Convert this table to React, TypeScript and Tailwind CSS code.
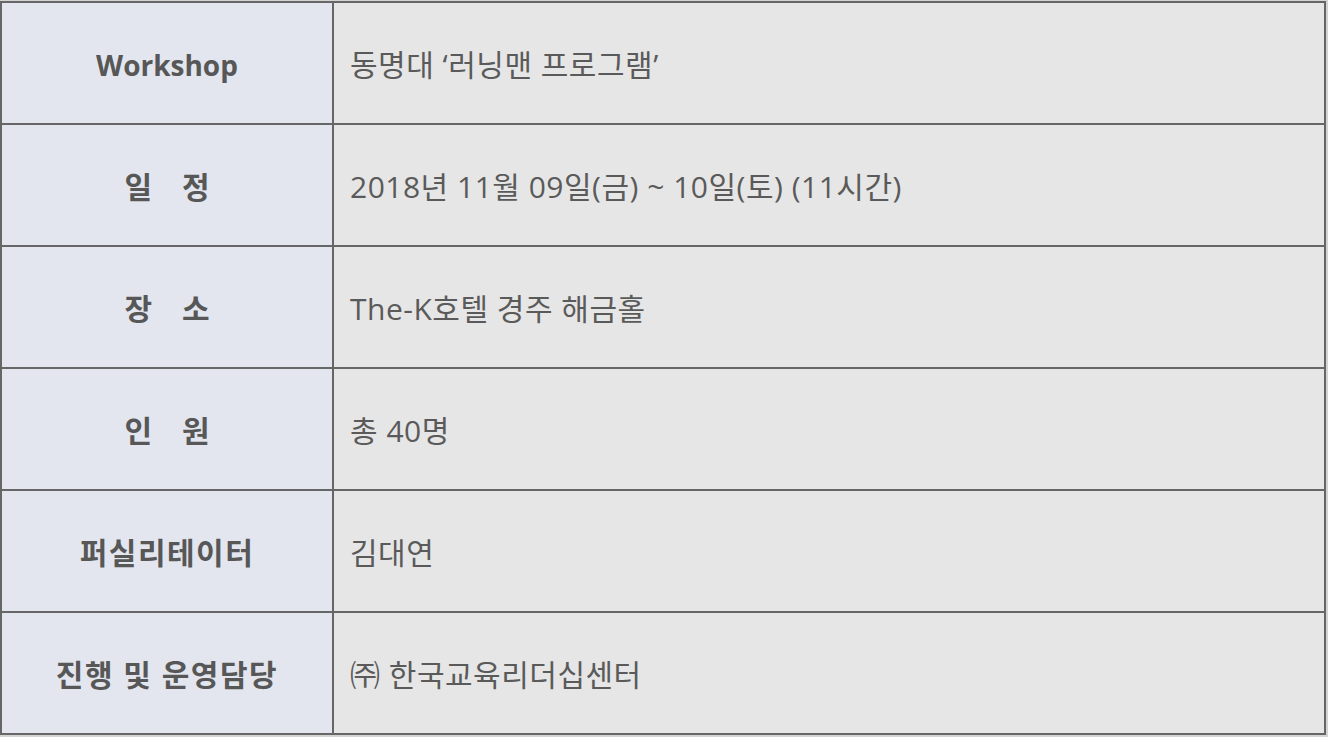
import React from "react";

const rows: { label: React.ReactNode; value: string }[] = [
  { label: "Workshop", value: "동명대 ‘러닝맨 프로그램’" },
  { label: ["일", "정"], value: "2018년 11월 09일(금) ~ 10일(토) (11시간)" },
  { label: ["장", "소"], value: "The-K호텔 경주 해금홀" },
  { label: ["인", "원"], value: "총 40명" },
  { label: "퍼실리테이터", value: "김대연" },
  { label: "진행 및 운영담당", value: "㈜ 한국교육리더십센터" },
];

export default function App() {
  return (
    <div
      className="w-[1328px] h-[737px] bg-[#d4d4d4] pt-px"
      style={{ fontFamily: '"Open Sans", "Noto Sans CJK KR", sans-serif' }}
    >
      <div className="w-[1326px] grid grid-cols-[330px_990px] auto-rows-[120px] gap-[2px] p-[2px] bg-[#666666]">
        {rows.map((r, i) => (
          <React.Fragment key={i}>
            <div className="bg-[#e3e6ee] flex items-center justify-center pt-[3px] font-bold text-[#575757]">
              {Array.isArray(r.label) ? (
                <span className="flex gap-[30px] text-[30px]">
                  <span>{r.label[0]}</span>
                  <span>{r.label[1]}</span>
                </span>
              ) : i === 0 ? (
                <span className="text-[28px]">{r.label}</span>
              ) : (
                <span className="text-[30px] tracking-[1.5px]">{r.label}</span>
              )}
            </div>
            <div className="bg-[#e6e6e6] flex items-center pl-[16px] pt-[3px] text-[30px] tracking-[0.5px] text-[#5a5a5a]">
              {r.value}
            </div>
          </React.Fragment>
        ))}
      </div>
    </div>
  );
}
